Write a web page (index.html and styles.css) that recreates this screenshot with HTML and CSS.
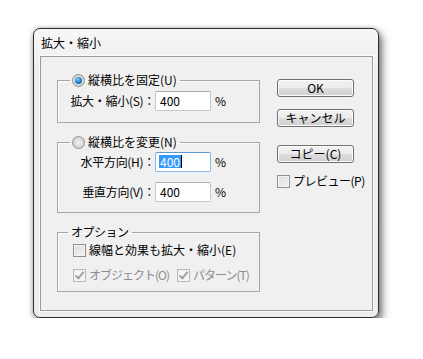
FILE: index.html
```html
<!DOCTYPE html>
<html lang="ja">
<head>
    <meta charset="UTF-8">
    <title>拡大・縮小</title>
    <link rel="stylesheet" href="styles.css">
</head>
<body>
    <div class="dialog">
        <div class="titlebar">拡大・縮小</div>

        <div class="client">
            <div class="main">
                <!-- 縦横比を固定 -->
                <fieldset class="group group-fixed">
                    <legend><span class="radio checked"></span>縦横比を固定(U)</legend>
                    <div class="field">
                        <label class="field-label">拡大・縮小(S)：</label>
                        <span class="textbox">400</span>
                        <span class="unit">%</span>
                    </div>
                </fieldset>

                <!-- 縦横比を変更 -->
                <fieldset class="group group-free">
                    <legend><span class="radio"></span>縦横比を変更(N)</legend>
                    <div class="field">
                        <label class="field-label">水平方向(H)：</label>
                        <span class="textbox focused"><span class="selection">400</span></span>
                        <span class="unit">%</span>
                    </div>
                    <div class="field field-second">
                        <label class="field-label">垂直方向(V)：</label>
                        <span class="textbox">400</span>
                        <span class="unit">%</span>
                    </div>
                </fieldset>

                <!-- オプション -->
                <fieldset class="group group-options">
                    <legend class="legend-text">オプション</legend>
                    <div class="check-row">
                        <span class="check"><span class="checkbox"></span>線幅と効果も拡大・縮小(E)</span>
                    </div>
                    <div class="check-row disabled">
                        <span class="check"><span class="checkbox checked"></span>オブジェクト(O)</span>
                        <span class="check check-pattern"><span class="checkbox checked"></span>パターン(T)</span>
                    </div>
                </fieldset>
            </div>

            <div class="side">
                <button class="btn">OK</button>
                <button class="btn btn-cancel">キャンセル</button>
                <button class="btn btn-copy">コピー(C)</button>
                <div class="check-row preview">
                    <span class="check"><span class="checkbox"></span>プレビュー(P)</span>
                </div>
            </div>
        </div>
    </div>
</body>
</html>
```

FILE: styles.css
```css
body {
    margin: 0;
    background-color: #fff;
    font-family: "Noto Sans CJK JP", "Noto Sans", sans-serif;
    font-size: 12px;
    line-height: 16px;
    color: #000;
}

.dialog {
    box-sizing: border-box;
    width: 346px;
    height: 290px;
    margin: 28px 0 0 33px;
    border: 1px solid #2f2f2f;
    border-radius: 7px;
    background: linear-gradient(#f7f7f7, #eeeeee 40px, #ededed);
    box-shadow: 3px 5px 9px rgba(0, 0, 0, 0.55), 0 0 4px rgba(0, 0, 0, 0.25);
}

.titlebar {
    height: 27px;
    padding-left: 7px;
    line-height: 27px;
}

.client {
    box-sizing: border-box;
    height: 255px;
    margin: 0 5px 6px 6px;
    padding: 15px 0 0 16px;
    border: 1px solid #9b9b9b;
    box-shadow: 0 0 0 1px #fbfbfb;
    background-color: #f0f0f0;
    display: flex;
    gap: 17px;
}

.main {
    width: 203px;
}

/* group boxes */
.group {
    margin: 0 0 11px 0;
    padding: 0;
    border: 1px solid #a7a7a7;
    box-shadow: inset 1px 1px 0 #fcfcfc;
    min-width: 0;
}

.group legend {
    display: flex;
    align-items: center;
    margin-left: 12px;
    padding: 0 3px 0 2px;
    line-height: 16px;
    white-space: nowrap;
}

.group-fixed {
    padding-bottom: 11px;
}

.group-free {
    padding-bottom: 10px;
}

.group-options {
    padding-bottom: 8px;
}

.group .legend-text {
    margin-left: 10px;
    padding: 0 3px;
    letter-spacing: -0.5px;
}

.field {
    display: flex;
    align-items: center;
    height: 20px;
    margin-top: 3px;
    white-space: nowrap;
}

.group-free .field {
    margin-top: 2px;
}

.group-free .field-second {
    margin-top: 10px;
}

.field-label {
    width: 97px;
    text-align: right;
    letter-spacing: -0.3px;
}

.textbox {
    box-sizing: border-box;
    width: 56px;
    height: 20px;
    padding: 0 0 0 4px;
    border: 1px solid #c4c8cf;
    border-top-color: #abadb3;
    border-radius: 2px;
    background-color: #fff;
    line-height: 18px;
}

.textbox.focused {
    border-color: #8ab8e4;
    border-top-color: #5d96cc;
}

.selection {
    display: inline-block;
    padding: 0 1px 0 1px;
    margin-left: -1px;
    line-height: 13px;
    background-color: #3399ff;
    color: #fff;
    border-right: 1px solid #000;
}

.unit {
    margin-left: 4px;
}

/* radio buttons */
.radio {
    box-sizing: border-box;
    width: 13px;
    height: 13px;
    margin-right: 3px;
    border: 1px solid #8e8f8f;
    border-radius: 50%;
    background: radial-gradient(circle at 50% 50%, #f4f4f4 0, #d6d6d6 60%, #e9e9e9 100%);
    position: relative;
}

.radio.checked::after {
    content: '';
    position: absolute;
    top: 2px;
    left: 2px;
    width: 7px;
    height: 7px;
    border-radius: 50%;
    background: radial-gradient(circle at 40% 35%, #8fd3ff 0, #1f8ad6 45%, #0b4f8f 100%);
}

/* checkboxes */
.check-row {
    display: flex;
    align-items: center;
    height: 16px;
    margin-top: 2px;
    padding-left: 15px;
    white-space: nowrap;
}

.check {
    display: flex;
    align-items: center;
}

.check-row.disabled {
    margin-top: 9px;
    color: #8d8d8d;
    letter-spacing: -1px;
}

.check-pattern {
    margin-left: 8px;
}

.checkbox {
    box-sizing: border-box;
    flex: none;
    width: 13px;
    height: 13px;
    margin-right: 3px;
    border: 1px solid #8e8f8f;
    background: linear-gradient(135deg, #dcdcdc, #f4f4f4);
    box-shadow: inset 0 0 0 1px #f4f4f4;
    position: relative;
}

.disabled .checkbox {
    border-color: #b8b8b8;
    background: #f4f4f4;
}

.checkbox.checked::after {
    content: '';
    position: absolute;
    left: 3px;
    top: 0px;
    width: 3px;
    height: 7px;
    border-right: 2px solid #a3a3a3;
    border-bottom: 2px solid #a3a3a3;
    transform: rotate(40deg);
}

/* buttons */
.side {
    width: 77px;
    padding-top: 7px;
    display: flex;
    flex-direction: column;
}

.btn {
    box-sizing: border-box;
    width: 77px;
    height: 18px;
    padding: 0;
    border: 1px solid #707070;
    border-radius: 3px;
    background: linear-gradient(#f2f2f2 0%, #ebebeb 50%, #dddddd 50%, #cfcfcf 100%);
    box-shadow: inset 0 0 0 1px #fcfcfc;
    font-family: inherit;
    font-size: 12px;
    line-height: 16px;
    color: #000;
}

.btn-cancel {
    margin-top: 12px;
}

.btn-copy {
    margin-top: 18px;
}

.check-row.preview {
    margin-top: 10px;
    padding-left: 0;
    letter-spacing: -0.5px;
}
```
